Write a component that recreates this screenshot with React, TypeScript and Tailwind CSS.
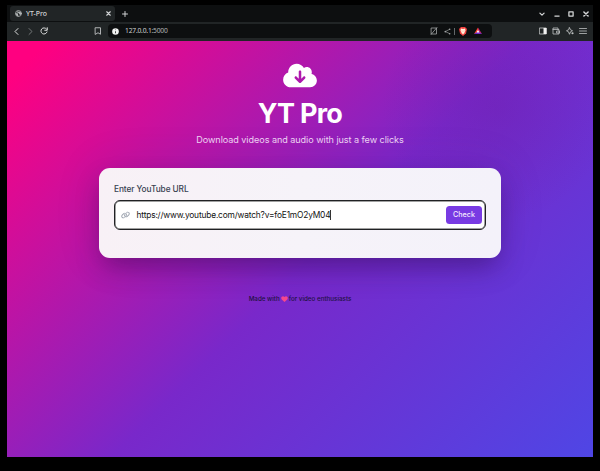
import React from "react";
import { FaCloudArrowDown, FaLink } from "react-icons/fa6";

const stroke = {
  fill: "none",
  stroke: "currentColor",
  strokeLinecap: "round" as const,
  strokeLinejoin: "round" as const,
};

function TabStrip() {
  return (
    <div className="flex h-[17px] items-center bg-[#0d0f10] text-[#d5d7d8]">
      <div className="ml-[3px] flex h-[14.5px] w-[105px] items-center rounded-[3px] bg-[#212526] pl-[5px] pr-[4px]">
        <svg className="h-[7px] w-[7px] text-[#aeb2b3]" viewBox="0 0 14 14">
          <circle cx="7" cy="7" r="6" {...stroke} strokeWidth="1.6" />
          <path d="M1 6 6 7v3l2 3-4-1-3-4Zm5-5 1 3 3-1 3 3-1 4-3-1-2-3-3-1Z" fill="currentColor" />
        </svg>
        <span className="ml-[4px] w-[40px] whitespace-nowrap text-[6.9px] font-medium leading-[10px]">YT-Pro</span>
        <svg className="ml-auto h-[5px] w-[5px]" viewBox="0 0 10 10">
          <path d="m1.5 1.5 7 7m0-7-7 7" {...stroke} strokeWidth="2.2" />
        </svg>
      </div>
      <svg className="ml-[6.5px] h-[6px] w-[6px]" viewBox="0 0 10 10">
        <path d="M5 .8v8.4M.8 5h8.4" {...stroke} strokeWidth="1.6" />
      </svg>
      <div className="ml-auto mr-[4.5px] flex items-center">
        <svg className="h-[6px] w-[6px]" viewBox="0 0 10 10"><path d="m1.5 3.5 3.5 3.5 3.5-3.5" {...stroke} strokeWidth="2" /></svg>
        <svg className="ml-[9px] h-[6px] w-[6px]" viewBox="0 0 10 10"><path d="M1.5 8.5h7" {...stroke} strokeWidth="2.1" /></svg>
        <svg className="ml-[8.5px] h-[6px] w-[6px]" viewBox="0 0 10 10"><path d="M1.5 1.5h7v7h-7Z" {...stroke} strokeWidth="2.1" /></svg>
        <svg className="ml-[8.5px] h-[6px] w-[6px]" viewBox="0 0 10 10"><path d="m1.5 1.5 7 7m0-7-7 7" {...stroke} strokeWidth="2.4" /></svg>
      </div>
    </div>
  );
}

function Toolbar() {
  return (
    <div className="flex h-[19px] items-center bg-[#212526] pb-px text-[#bfc2c3]">
      <svg className="ml-[6px] h-[9px] w-[8px] text-[#dedfdf]" viewBox="0 0 16 18"><path d="M10 3 4 9l6 6" {...stroke} strokeWidth="2" /></svg>
      <svg className="ml-[5px] h-[9px] w-[8px] text-[#737778]" viewBox="0 0 16 18"><path d="m6 3 6 6-6 6" {...stroke} strokeWidth="2" /></svg>
      <svg className="ml-[5.5px] h-[8px] w-[8px] text-[#dedfdf]" viewBox="0 0 16 16"><path d="M13 4A6.2 6.2 0 1 0 14 10M14.5 1.5v5h-5" {...stroke} strokeWidth="2" /></svg>
      <svg className="ml-[46px] h-[8px] w-[8px]" viewBox="0 0 16 16"><path d="M3 1.5h10v13l-5-3-5 3Z" {...stroke} strokeWidth="1.8" /></svg>
      <div className="ml-[6px] flex h-[14px] w-[384px] items-center rounded-[4px] bg-[#0d0f10] pl-[4px]">
        <svg className="h-[7px] w-[7px]" viewBox="0 0 14 14">
          <circle cx="7" cy="7" r="6.6" fill="#f2f2f2" />
          <path d="M7 6.5v4M7 3.2v1" stroke="#17191a" strokeWidth="1.6" />
        </svg>
        <span className="ml-[6.5px] w-[60px] whitespace-nowrap text-[6.7px] leading-[10px] tracking-[-0.2px] text-[#d0d2d3]">
          127.0.0.1<span className="text-[#b1b5b6]">:5000</span>
        </span>
        <svg className="ml-auto h-[8px] w-[8px] text-[#a2a5a6]" viewBox="0 0 16 16"><path d="M3 2h10v12H3ZM14 1 2 15" {...stroke} strokeWidth="1.6" /></svg>
        <svg className="ml-[6px] h-[7px] w-[7px] text-[#a2a5a6]" viewBox="0 0 16 16">
          <path d="M13 3 3 8l10 5" {...stroke} strokeWidth="1.5" />
          <circle cx="13" cy="3" r="1.8" fill="currentColor" /><circle cx="3" cy="8" r="2" fill="currentColor" /><circle cx="13" cy="13" r="1.8" fill="currentColor" />
        </svg>
        <span className="ml-[3px] h-[7px] w-px bg-[#63676a]" />
        <svg className="ml-[4px] h-[9px] w-[8px]" viewBox="0 0 16 18">
          <path d="m4 0 8 0 4 4-2 9-6 5-6-5-2-9Z" fill="#ee3f3d" />
          <path d="m4 3 4 1 4-1 1 4-2 4 0 1-3 3-3-3 0-1-2-4Z" fill="#fff2dc" />
          <path d="m5 7 2 1-1 1Zm6 0-2 1 1 1ZM7 12h2l-1 1Z" fill="#f04b36" />
        </svg>
        <svg className="ml-[7px] mr-[10px] h-[8px] w-[8px]" viewBox="0 0 16 16">
          <path d="m8 1-8 13 8-4Z" fill="#ff4724" />
          <path d="m8 1 8 13-8-4Z" fill="#c02572" />
          <path d="M0 14h16l-8-5Z" fill="#712bc8" />
          <path d="m8 6 3 5H5Z" fill="#fff" />
        </svg>
      </div>
      <div className="ml-auto mr-[6px] flex items-center gap-[5.4px]">
        <svg className="h-[8px] w-[8px]" viewBox="0 0 16 16"><path d="M1.5 2h13v12h-13Z" {...stroke} strokeWidth="1.7" /><path d="M9 2h6v12H9Z" fill="#f1f1f1" /></svg>
        <svg className="h-[8px] w-[8px]" viewBox="0 0 16 16"><path d="M2 5h12v9H2V2h10v3M10 8h5v4h-5Z" {...stroke} strokeWidth="1.6" /></svg>
        <svg className="h-[8px] w-[8px]" viewBox="0 0 16 16"><path d="m7 1.5 2 4 4 2-4 2-2 5-2-5-4-2 4-2Z" {...stroke} strokeWidth="1.7" /><circle cx="13" cy="12.5" r="2.2" fill="currentColor" /></svg>
        <svg className="h-[8px] w-[8px]" viewBox="0 0 16 16"><path d="M1 3h14M1 8h14M1 13h14" {...stroke} strokeWidth="1.6" /></svg>
      </div>
    </div>
  );
}

function UrlCard() {
  return (
    <section className="mt-[21px] h-[90px] w-[402px] rounded-[11px] bg-linear-to-r from-[#f8f1f6] via-[#f6f3f9] to-[#f4f2fa] px-[15px] pt-[15px] shadow-[0_12px_26px_-4px_rgba(35,5,65,0.4),0_0_45px_rgba(65,5,100,0.13)]">
      <label className="block h-[12px] whitespace-nowrap text-[8.3px] font-medium leading-[12px] tracking-[-0.08px] text-[#374151]">Enter YouTube URL</label>
      <div className="mt-[5px] flex h-[30px] items-center rounded-[6px] border-[1.5px] border-[#202124] bg-white pb-px pl-[6px] pr-[3px] shadow-[inset_0_0_0_0.5px_#444]">
        <FaLink className="h-[8px] w-[9px] text-[#9ca3af]" />
        <span className="ml-[6.5px] whitespace-nowrap text-[8.4px] leading-[12px] tracking-[-0.18px] text-[#111]">https://www.youtube.com/watch?v=foE1mO2yM04</span>
        <span className="h-[10px] w-px bg-[#333]" />
        <button className="ml-auto h-[18px] w-[36px] rounded-[3.5px] bg-[#783be3] pt-[1.5px] text-[7.2px] font-medium leading-[12px] text-[#f4eafe]">Check</button>
      </div>
    </section>
  );
}

export default function App() {
  return (
    <div className="h-[471px] w-[600px] overflow-hidden bg-black pl-[7px] pt-[5px] font-['Inter',sans-serif]">
      <div className="w-[586px]">
        <header className="font-['Noto_Sans',sans-serif]">
          <TabStrip />
          <Toolbar />
        </header>
        <main className="flex h-[416px] flex-col items-center bg-[radial-gradient(circle_at_490px_66px,rgba(102,25,155,0.28),transparent_115px),linear-gradient(135deg,#ff0080_4%,#7928ca_52%,#4f46e5_100%)]">
          <FaCloudArrowDown className="mt-[21px] h-[27px] w-[34px] text-white" />
          <h1 className="mt-[7px] whitespace-nowrap text-[27px] font-bold leading-[36px] tracking-[-0.75px] text-white">YT Pro</h1>
          <p className="mt-[1px] whitespace-nowrap text-[9.1px] leading-[14px] tracking-[-0.06px] text-[#efd5f4]">Download videos and audio with just a few clicks</p>
          <UrlCard />
          <footer className="mt-[35px] flex h-[12px] items-center whitespace-nowrap text-[6.25px] font-medium leading-[12px] text-[#211142]">
            Made with
            <svg className="mx-[1px] h-[6.5px] w-[7px]" viewBox="0 0 14 13"><path d="M7 12 1.5 7C-2 2 4-2 7 2c3-4 9 0 5.5 5Z" fill="#f6478c" /></svg>
            for video enthusiasts
          </footer>
        </main>
      </div>
    </div>
  );
}
